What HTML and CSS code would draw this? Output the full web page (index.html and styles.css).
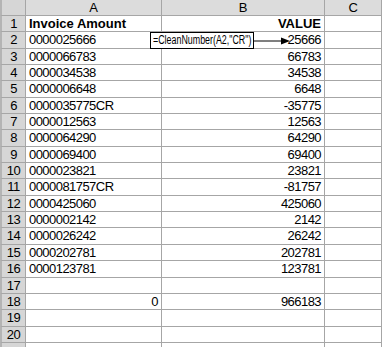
FILE: index.html
```html
<!DOCTYPE html>
<html>
<head>
<meta charset="utf-8">
<link rel="stylesheet" href="styles.css">
</head>
<body>
<div class="sheet">
  <div class="grid">
    <div class="corner"></div><div class="colhead">A</div><div class="colhead">B</div><div class="colhead">C</div>

    <div class="rowhead">1</div><div class="cell bold">Invoice Amount</div><div class="cell num bold">VALUE</div><div class="cell"></div>
    <div class="rowhead">2</div><div class="cell">0000025666</div><div class="cell num">25666</div><div class="cell"></div>
    <div class="rowhead">3</div><div class="cell">0000066783</div><div class="cell num">66783</div><div class="cell"></div>
    <div class="rowhead">4</div><div class="cell">0000034538</div><div class="cell num">34538</div><div class="cell"></div>
    <div class="rowhead">5</div><div class="cell">0000006648</div><div class="cell num">6648</div><div class="cell"></div>
    <div class="rowhead">6</div><div class="cell">0000035775CR</div><div class="cell num">-35775</div><div class="cell"></div>
    <div class="rowhead">7</div><div class="cell">0000012563</div><div class="cell num">12563</div><div class="cell"></div>
    <div class="rowhead">8</div><div class="cell">0000064290</div><div class="cell num">64290</div><div class="cell"></div>
    <div class="rowhead">9</div><div class="cell">0000069400</div><div class="cell num">69400</div><div class="cell"></div>
    <div class="rowhead">10</div><div class="cell">0000023821</div><div class="cell num">23821</div><div class="cell"></div>
    <div class="rowhead">11</div><div class="cell">0000081757CR</div><div class="cell num">-81757</div><div class="cell"></div>
    <div class="rowhead">12</div><div class="cell">0000425060</div><div class="cell num">425060</div><div class="cell"></div>
    <div class="rowhead">13</div><div class="cell">0000002142</div><div class="cell num">2142</div><div class="cell"></div>
    <div class="rowhead">14</div><div class="cell">0000026242</div><div class="cell num">26242</div><div class="cell"></div>
    <div class="rowhead">15</div><div class="cell">0000202781</div><div class="cell num">202781</div><div class="cell"></div>
    <div class="rowhead">16</div><div class="cell">0000123781</div><div class="cell num">123781</div><div class="cell"></div>
    <div class="rowhead">17</div><div class="cell"></div><div class="cell"></div><div class="cell"></div>
    <div class="rowhead">18</div><div class="cell num">0</div><div class="cell num">966183</div><div class="cell"></div>
    <div class="rowhead">19</div><div class="cell"></div><div class="cell"></div><div class="cell"></div>
    <div class="rowhead">20</div><div class="cell"></div><div class="cell"></div><div class="cell"></div>
    <div class="rowhead"></div><div class="cell"></div><div class="cell"></div><div class="cell"></div>
  </div>
  <div class="callout"><span class="callout-text">=CleanNumber(A2,"CR")</span></div>
  <svg class="arrow" width="40" height="10" viewBox="0 0 40 10">
    <line x1="0" y1="5" x2="30" y2="5" stroke="#000" stroke-width="1"/>
    <polygon points="28,1.5 37,5 28,8.5" fill="#000"/>
  </svg>
</div>
</body>
</html>
```
FILE: styles.css
```css
html, body {
  margin: 0;
  padding: 0;
  background: #fff;
}
.sheet {
  position: relative;
  width: 382px;
  height: 347px;
  overflow: hidden;
  font-family: "Liberation Sans", Arial, sans-serif;
  font-size: 13px;
  color: #000;
}
.grid {
  display: grid;
  grid-template-columns: 26px 136px 163px 1fr;
  grid-template-rows: 16px repeat(21, 16.35px);
}
.corner, .colhead, .rowhead, .cell {
  box-sizing: border-box;
  border-right: 1px solid #a6a6a6;
  border-bottom: 1px solid #a6a6a6;
  line-height: 15px;
  white-space: nowrap;
  overflow: hidden;
}
.corner {
  background: #d6d6d6;
  border-left: 2px solid #b4b4b4;
}
.colhead {
  background: #dcdcdc;
  text-align: center;
  letter-spacing: -0.3px;
}
.rowhead {
  background: #d6d6d6;
  border-left: 2px solid #b4b4b4;
  text-align: center;
  letter-spacing: -0.5px;
}
.cell {
  padding: 0 3px;
  letter-spacing: -0.55px;
}
.num {
  text-align: right;
}
.bold {
  font-weight: bold;
  letter-spacing: 0;
}
.callout {
  position: absolute;
  left: 150px;
  top: 32px;
  width: 104px;
  height: 17px;
  box-sizing: border-box;
  padding: 0 2px;
  border: 1px solid #000;
  background: #fff;
  font-size: 12px;
  line-height: 15px;
  white-space: nowrap;
  overflow: hidden;
}
.callout-text {
  display: inline-block;
  transform: scaleX(0.74);
  transform-origin: left center;
}
.arrow {
  position: absolute;
  left: 253px;
  top: 36px;
}
```
